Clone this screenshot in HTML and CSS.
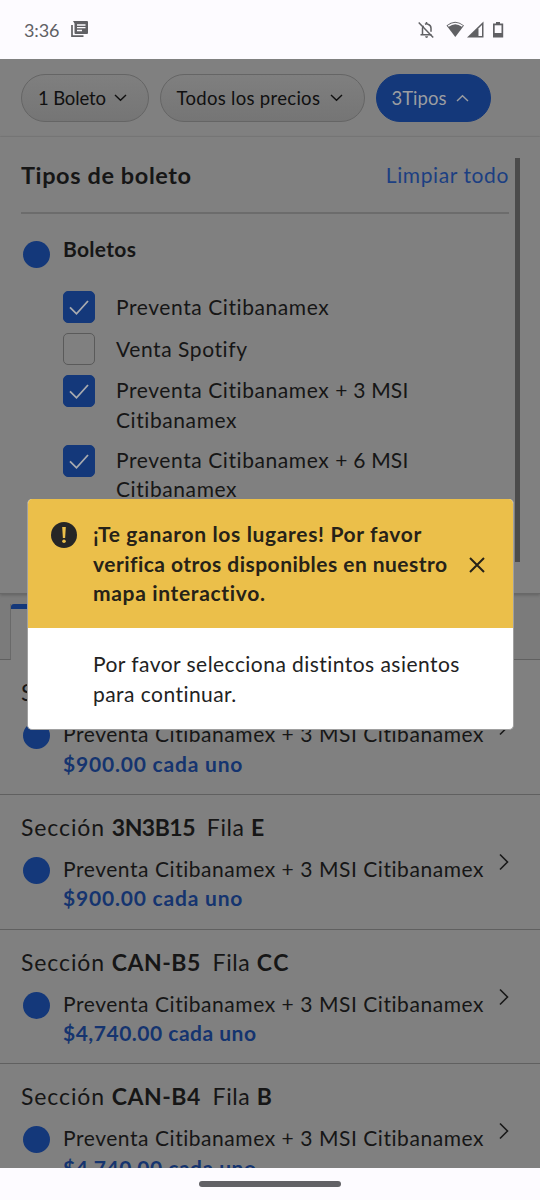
FILE: index.html
```html
<!DOCTYPE html>
<html lang="es">
<head>
<meta charset="utf-8">
<meta name="viewport" content="width=device-width">
<title>Boletos</title>
<link rel="stylesheet" href="styles.css">
</head>
<body>
<div class="screen">
  <header class="status">
    <span class="clock">3:36</span>
    <svg class="news" width="17" height="17" viewBox="0 0 17 17"><path d="M1 4v11.2h11.5" fill="none" stroke="#606064" stroke-width="1.7"/><path d="M2 0h14a1 1 0 0 1 1 1v11a1 1 0 0 1-1 1H4.500a1 1 0 0 1-1-1V2.500z" fill="#606064"/><path d="M6 4h8.500M6 6.700h8.500M6 9.500h5" stroke="#fdfbff" stroke-width="1.300"/></svg>
    <svg class="signals" width="87" height="18" viewBox="0 0 87 18">
      <g fill="none" stroke="#606064" stroke-width="1.500"><path d="M4.500 13.500V7.200q0-1.500 1-2.500M7 3.200q1.500-.7 3 0 3 1 3 4v3.600M2.500 13.700h11M8.500 3V1"/><path d="M.7 1.500l14.500 15"/></g>
      <path d="M7 15.300h3.200q-.3 1.700-1.600 1.700T7 15.300z" fill="#606064"/>
      <path d="M28.500 4.400Q37-2.700 46 4.400L37.300 16z" fill="#606064"/>
      <path d="M30.200 5.200Q37.300-.2 44.400 5.200" fill="none" stroke="#fdfbff" stroke-width="1.600"/>
      <path d="M49 16.500L65.500.5v16z" fill="#606064"/><path d="M60.500 7.500L64 4v11h-3.500z" fill="#fdfbff"/>
      <path d="M78 1h4v1.500h3.200v14H75v-14h3z" fill="#606064"/><path d="M76.700 4.300h6.800V12h-6.800z" fill="#fdfbff"/>
    </svg>
  </header>
  <main class="app">
    <nav class="filters">
      <button class="pill one"><span>1 Boleto</span><svg width="13" height="8" viewBox="0 0 13 8"><path d="M1 1l5.500 5.300L12 1"/></svg></button>
      <button class="pill prices"><span>Todos los precios</span><svg width="13" height="8" viewBox="0 0 13 8"><path d="M1 1l5.500 5.300L12 1"/></svg></button>
      <button class="pill active"><span>3Tipos</span><svg width="13" height="8" viewBox="0 0 13 8"><path d="M1 7l5.500-5.300L12 7"/></svg></button>
    </nav>
    <section class="panel">
      <div class="panel-body">
        <div class="panel-head"><h1>Tipos de boleto</h1><a class="clear">Limpiar todo</a></div>
        <div class="group"><i class="dot"></i><h2>Boletos</h2></div>
        <ul class="options">
          <li><span class="box on"><svg width="22" height="18" viewBox="0 0 22 18"><path d="M2 9.300l6.500 6.500L20 3"/></svg></span><span class="label">Preventa Citibanamex</span></li>
          <li><span class="box"></span><span class="label">Venta Spotify</span></li>
          <li class="double"><span class="box on"><svg width="22" height="18" viewBox="0 0 22 18"><path d="M2 9.300l6.500 6.500L20 3"/></svg></span><span class="label">Preventa Citibanamex <span class="months">+ 3 MSI</span><br>Citibanamex</span></li>
          <li class="double"><span class="box on"><svg width="22" height="18" viewBox="0 0 22 18"><path d="M2 9.300l6.500 6.500L20 3"/></svg></span><span class="label">Preventa Citibanamex <span class="months">+ 6 MSI</span><br>Citibanamex</span></li>
        </ul>
      </div>
      <div class="scrollbar"></div>
    </section>
    <div class="tabs"><div class="tab-edge"></div><div class="tab"></div><div class="tab-rest"></div></div>
    <section class="list">
      <article class="seat">
        <h3>Sección <b class="numeric">3N3B15</b> <span class="row">Fila <b>E</b></span></h3>
        <div class="detail"><i class="dot"></i><div><p>Preventa Citibanamex + 3 MSI Citibanamex</p><p class="price">$900.00 cada uno</p></div><svg class="chev" width="10" height="18" viewBox="0 0 10 18"><path d="M1 1.500l7.500 7.500L1 16.500"/></svg></div>
      </article>
      <article class="seat">
        <h3>Sección <b class="numeric">3N3B15</b> <span class="row">Fila <b>E</b></span></h3>
        <div class="detail"><i class="dot"></i><div><p>Preventa Citibanamex + 3 MSI Citibanamex</p><p class="price">$900.00 cada uno</p></div><svg class="chev" width="10" height="18" viewBox="0 0 10 18"><path d="M1 1.500l7.500 7.500L1 16.500"/></svg></div>
      </article>
      <article class="seat">
        <h3>Sección <b>CAN-B5</b> <span class="row">Fila <b class="wide">CC</b></span></h3>
        <div class="detail"><i class="dot"></i><div><p>Preventa Citibanamex + 3 MSI Citibanamex</p><p class="price long">$4,740.00 cada uno</p></div><svg class="chev" width="10" height="18" viewBox="0 0 10 18"><path d="M1 1.500l7.500 7.500L1 16.500"/></svg></div>
      </article>
      <article class="seat">
        <h3>Sección <b>CAN-B4</b> <span class="row">Fila <b>B</b></span></h3>
        <div class="detail"><i class="dot"></i><div><p>Preventa Citibanamex + 3 MSI Citibanamex</p><p class="price long">$4,740.00 cada uno</p></div><svg class="chev" width="10" height="18" viewBox="0 0 10 18"><path d="M1 1.500l7.500 7.500L1 16.500"/></svg></div>
      </article>
    </section>
  </main>
  <footer class="home"><div class="handle"></div></footer>
  <div class="modal" role="dialog">
    <div class="modal-head">
      <svg class="alert" width="26" height="26" viewBox="0 0 26 26"><circle cx="13" cy="13" r="13" fill="#262626"/><path d="M11.200 5h3.600l-.7 11h-2.200z" fill="#ebbf4a"/><circle cx="13" cy="19.300" r="1.800" fill="#ebbf4a"/></svg>
      <p>¡Te ganaron los lugares! Por favor<br><span class="tight">verifica otros disponibles en nuestro</span><br>mapa interactivo.</p>
      <svg class="close" width="16" height="16" viewBox="0 0 16 16"><path d="M1 1l14 14M15 1L1 15"/></svg>
    </div>
    <div class="modal-body">Por favor selecciona distintos asientos<br>para continuar.</div>
  </div>
</div>
</body>
</html>
```

FILE: styles.css
```css
* { box-sizing: border-box; margin: 0; padding: 0; }
body { font-family: Lato, "Open Sans", sans-serif; font-size: 21px; color: #161616; }
.screen { position: relative; width: 540px; height: 1200px; overflow: hidden; display: flex; flex-direction: column; background: #fdfbff; }
.status { height: 59px; flex: none; display: flex; align-items: center; padding: 0 36px 0 24px; color: #606064; }
.clock { font-size: 18px; width: 47px; letter-spacing: -.1px; }
.signals { margin-left: auto; margin-right: -1px; }
.app { flex: 1; min-height: 0; overflow: hidden; background: #808080; }
.filters { height: 78px; display: flex; gap: 10.500px; padding: 15px 21px 0; border-bottom: 1px solid #7a7a7a; }
.pill { height: 48px; border: 1px solid #656565; border-radius: 24px; background: linear-gradient(#7f7f7f, #757575); font: 18.500px Lato, sans-serif; color: #101010; display: flex; align-items: center; justify-content: space-between; padding: 0 21px 0 16px; white-space: nowrap; }
.pill svg { fill: none; stroke: currentColor; stroke-width: 1.400; }
.one { width: 128px; letter-spacing: -.15px; }
.prices { width: 205.500px; letter-spacing: .3px; }
.active { width: 115px; padding-left: 15px; background: #14387a; border-color: #14387a; color: #9b9da1; }
.panel { height: 457px; display: flex; padding: 21px 20px 0 21px; border-bottom: 1px solid #686868; box-shadow: 0 1px 3px #606060; position: relative; }
.panel-body { width: 488px; }
.scrollbar { width: 5px; height: 404px; background: #4b4b4b; margin-left: 6px; flex: none; }
.panel-head { height: 56px; display: flex; justify-content: space-between; border-bottom: 2px solid #6c6c6c; line-height: 34px; }
h1 { font-size: 23.500px; font-weight: 700; letter-spacing: .6px; }
.clear { color: #1c3f82; letter-spacing: .6px; }
.dot { width: 27px; height: 27px; border-radius: 50%; background: #14387a; flex: none; }
.group { display: flex; padding: 27px 2px 0; }
h2 { font-size: 21px; font-weight: 700; line-height: 30px; margin: -7px 0 0 13px; letter-spacing: .3px; }
.options { list-style: none; padding: 23px 0 0 42px; }
.options li { display: flex; height: 42px; }
.options .double { height: 69.500px; }
.box { width: 32px; height: 32px; border: 1px solid #5a5a5a; border-radius: 5px; flex: none; display: flex; align-items: center; justify-content: center; }
.on { background: #14387a; border-color: #14387a; }
.on svg { fill: none; stroke: #a9abaf; stroke-width: 1.800; }
.label { margin-left: 21px; line-height: 29.500px; letter-spacing: .58px; white-space: nowrap; padding-top: 1px; }
.double .label { padding-top: 0; }
.months { letter-spacing: .2px; }
.tabs { height: 66px; display: flex; padding-top: 10px; background: #7b7b7b; }
.tab-edge { width: 11px; border-bottom: 1px solid #606060; border-right: 1px solid #696969; }
.tab { width: 259px; border-top: 5px solid #14387a; border-radius: 3px 3px 0 0; background: #808080; }
.tab-rest { flex: 1; border-bottom: 1px solid #606060; }
.seat { height: 134.800px; border-bottom: 1px solid #606060; padding: 15px 0 0 21px; }
h3 { font-size: 23px; line-height: 34px; font-weight: 400; white-space: pre; letter-spacing: .9px; }
h3 b { font-weight: 700; letter-spacing: .5px; }
h3 .numeric { letter-spacing: -.5px; }
h3 .wide { letter-spacing: 1.500px; }
.row { margin-left: 5px; letter-spacing: .6px; }
.detail { display: flex; padding: 9px 0 0 2px; }
.detail .dot { margin-top: 4px; }
.detail > div { width: 421px; margin-left: 13px; padding-top: 1px; line-height: 29.500px; letter-spacing: .55px; white-space: nowrap; }
.price { font-weight: 700; color: #15346f; letter-spacing: .8px; }
.price.long { letter-spacing: .5px; }
.chev { margin: 0 0 0 15px; fill: none; stroke: #181818; stroke-width: 1.600; }
.home { height: 32px; flex: none; display: flex; justify-content: center; padding-top: 13px; }
.handle { width: 142px; height: 6px; border-radius: 3px; background: #626166; }
.modal { position: absolute; left: 27px; top: 499px; width: 487px; height: 231px; border-radius: 5px; overflow: hidden; background: #fff; border: 1px solid #a0a0a0; border-top: 0; color: #222; line-height: 29.500px; white-space: nowrap; }
.modal-head { height: 129px; margin: 0 -1px; display: flex; background: #ebbf4a; padding: 20px 29px 0 24px; font-weight: 700; color: #262218; letter-spacing: .66px; }
.alert { margin-top: 3px; }
.modal-head p { margin-left: 16px; }
.tight { letter-spacing: .46px; }
.close { margin: 38px 0 0 auto; flex: none; fill: none; stroke: #262218; stroke-width: 2; }
.modal-body { padding: 21px 0 0 65px; letter-spacing: .45px; }
```
